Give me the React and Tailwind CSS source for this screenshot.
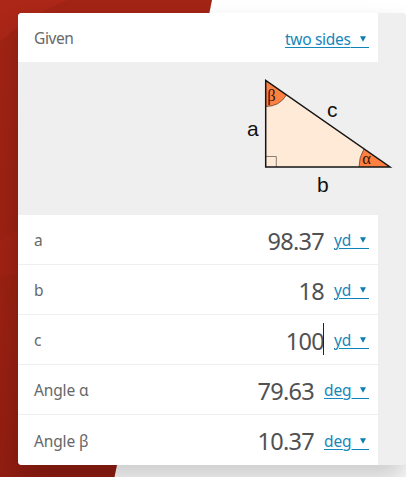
import { useState } from 'react'

const rows = [
  { label: 'a', value: '98.37', unit: 'yd' },
  { label: 'b', value: '18', unit: 'yd' },
  { label: 'c', value: '100', unit: 'yd' },
  { label: 'Angle α', value: '79.63', unit: 'deg' },
  { label: 'Angle β', value: '10.37', unit: 'deg' },
]

function UnitLink({ children, className = '' }) {
  return (
    <button className={`flex items-center justify-between text-[15.5px] leading-[22px] text-[#1687ba] ${className}`}>
      <span className="underline decoration-1 underline-offset-2">{children}</span>
      <span className="h-[18px] flex-1 border-b border-[#0b83b8]">
        <svg className="mt-[6px] mr-[3px] ml-auto h-[6px] w-[6px]" viewBox="0 0 6 6">
          <path d="M0 0.3H6L3 5.7Z" fill="#0b7db0" />
        </svg>
      </span>
    </button>
  )
}

function Triangle() {
  return (
    <svg className="ml-auto block h-[153px] w-[176px] overflow-visible" viewBox="230 62 176 153">
      <path d="M265.7 80.5V167H390Z" fill="#ffead7" />
      <path d="M265.7 80.5V106.5Q279.5 106.5 286.5 95Z" fill="#ff8040" />
      <path d="M390 167H359Q359 157 364 149Z" fill="#ff8040" />
      <path d="M265.7 106.5Q279.5 106.5 286.5 95M359 167Q359 157 364 149" fill="none" stroke="#4b3a30" strokeWidth="0.7" />
      <path d="M266 156.5H276.3V167" fill="none" stroke="#6b625c" strokeWidth="0.8" />
      <path d="M265.7 80.5V167H390Z" fill="none" stroke="#151515" strokeWidth="1.5" />
      <g fill="#111" fontFamily="Liberation Sans, sans-serif" fontSize="21">
        <text x="247" y="135.5">a</text>
        <text x="327" y="116.5">c</text>
        <text x="317" y="191.5">b</text>
      </g>
      <g fill="#321508" fontFamily="Liberation Serif, serif" fontSize="16.5">
        <text x="267.3" y="101">β</text>
        <text x="362.2" y="164">α</text>
      </g>
    </svg>
  )
}

export default function App() {
  const [focused] = useState('c')

  return (
    <div className="relative h-[477px] w-[406px] overflow-hidden bg-white pt-[13px] pl-[18px] font-['Noto_Sans','Open_Sans',sans-serif]">
      {/* Slanted page backdrop */}
      <svg className="absolute inset-0 h-full w-full" viewBox="0 0 406 477">
        <defs>
          <linearGradient id="backdrop" x1="0" y1="0" x2="0" y2="1">
            <stop offset="0" stopColor="#ac2718" />
            <stop offset="0.45" stopColor="#a62516" />
            <stop offset="1" stopColor="#981f13" />
          </linearGradient>
        </defs>
        <path d="M0 0H212L114.5 477H0Z" fill="url(#backdrop)" />
        <path d="M67 0H212L114.5 477H0V41Q28 17 67 0Z" fill="#7c180c" opacity="0.2" />
        <path d="M0 240Q8 234 18 230V274Q9 276 0 277Z" fill="#b62a18" opacity="0.2" />
      </svg>

      <main className="relative h-[452px] w-[388px] rounded-[4px] bg-[#efefef] text-[#66686a] shadow-[0_16px_28px_rgba(0,0,0,0.2)]">
        <div className="flex h-[49px] w-[360px] items-center justify-between rounded-tl-[4px] bg-white pr-[9px] pl-4 pt-[2px]">
          <span className="text-[15.5px] tracking-[-0.4px]">Given</span>
          <UnitLink className="w-[84px] tracking-[-0.3px]">two sides</UnitLink>
        </div>

        <div className="h-[153px] w-[388px]">
          <Triangle />
        </div>

        <div className="w-[360px] overflow-hidden rounded-bl-[4px] bg-white">
          {rows.map((row) => (
            <div key={row.label} className="flex h-[50px] items-center border-b border-[#efefef] pr-[9px] pl-4 last:border-b-0">
              <span className="mt-[3px] text-[15.5px] tracking-[-0.15px]">{row.label}</span>
              <span className="relative ml-auto pt-[2px] text-[23.5px] leading-[32px] tracking-[-0.7px] text-[#505153]">
                {row.value}
                {row.label === focused && <i className="absolute top-0 right-0 h-[32px] w-px bg-[#222]" />}
              </span>
              <UnitLink className={row.unit === 'yd' ? 'mt-[1px] ml-[10px] w-[35px] tracking-[-0.1px]' : 'mt-[1px] ml-[10px] w-[45px] tracking-[-0.1px]'}>
                {row.unit}
              </UnitLink>
            </div>
          ))}
        </div>
      </main>
    </div>
  )
}
